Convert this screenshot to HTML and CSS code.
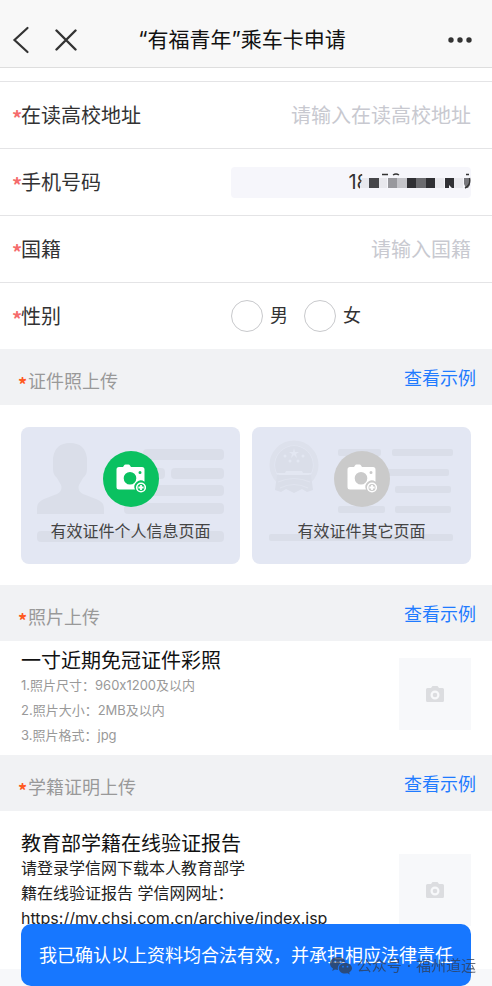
FILE: index.html
```html
<!DOCTYPE html>
<html lang="zh-CN">
<head>
<meta charset="utf-8">
<meta name="viewport" content="width=device-width, initial-scale=1">
<title>“有福青年”乘车卡申请</title>
<link rel="stylesheet" href="styles.css">
</head>
<body>
<svg class="defs" aria-hidden="true">
  <symbol id="camera-add" viewBox="0 0 30 30">
    <path fill="#fff" fill-rule="evenodd" d="M3 3H7L8 1.500Q8.500 .5 9.500 .5H12.500Q13.500 .5 14 1.500L15 3H26Q28.500 3 28.500 5.500V17.800A6.300 6.300 0 0 0 19 25.500H3Q.5 25.500 .5 23V5.500Q.5 3 3 3ZM14 8A6.300 6.300 0 1 0 14 20.600A6.300 6.300 0 1 0 14 8ZM24 7A1.500 1.500 0 1 0 24 10A1.500 1.500 0 1 0 24 7Z"/>
    <circle cx="25" cy="23.500" r="4.300" fill="none" stroke="#fff" stroke-width="1.600"/>
    <path d="M25 20.900V26.100M22.400 23.500H27.600" stroke="#fff" stroke-width="1.800"/>
  </symbol>
  <symbol id="camera" viewBox="0 0 18 16">
    <path fill="#dcdde0" fill-rule="evenodd" d="M1.500 2H5L6.500 0H11.500L13 2H16.500Q18 2 18 3.500V14.500Q18 16 16.500 16H1.500Q0 16 0 14.500V3.500Q0 2 1.500 2ZM9 4.500A4.500 4.500 0 1 0 9 13.500A4.500 4.500 0 1 0 9 4.500ZM9 6.700A2.300 2.300 0 1 1 9 11.300A2.300 2.300 0 1 1 9 6.700Z"/>
  </symbol>
</svg>

<header class="navbar">
  <div class="nav-side">
    <button class="icon-btn" type="button" aria-label="返回"><svg width="18" height="28" viewBox="0 0 18 28"><path d="M15.500 2L2.500 14L15.500 26" fill="none" stroke="#333" stroke-width="2.200" stroke-linecap="round"/></svg></button>
    <button class="icon-btn" type="button" aria-label="关闭"><svg width="22" height="22" viewBox="0 0 22 22"><path d="M1.500 1.500L20.500 20.500M20.500 1.500L1.500 20.500" fill="none" stroke="#333" stroke-width="2.400" stroke-linecap="round"/></svg></button>
  </div>
  <h1 class="nav-title">“有福青年”乘车卡申请</h1>
  <div class="nav-side nav-end">
    <button class="icon-btn" type="button" aria-label="更多"><svg width="24" height="6" viewBox="0 0 24 6"><g fill="#333"><circle cx="3" cy="3" r="2.700"/><circle cx="12" cy="3" r="2.700"/><circle cx="21" cy="3" r="2.700"/></g></svg></button>
  </div>
</header>

<form id="apply">
  <div class="row">
    <label class="label" for="address"><span class="star">*</span>在读高校地址</label>
    <input class="field" id="address" type="text" placeholder="请输入在读高校地址">
  </div>
  <div class="row">
    <label class="label" for="phone"><span class="star">*</span>手机号码</label>
    <div class="phone">
      <input class="field phone-field" id="phone" type="text" value="18">
      <svg class="mask" width="112" height="18" viewBox="0 0 112 18" aria-hidden="true">
        <path fill="#f6f6fb" d="M3 0H112V18H1V14L4 9Z"/>
        <path fill="#e8e8ed" d="M3 5H10V15H1ZM20 5H28V15H20ZM76 5H85V15H76ZM95 5H104V15H95Z"/>
        <path fill="#46464a" d="M10 5H20V15H10Z"/>
        <path fill="#98989d" d="M29 5H38V15H29Z"/>
        <path fill="#c4c4c9" d="M38 5H48V15H38Z"/>
        <path fill="#303034" d="M48 5H57V15H48ZM67 5H76V15H67ZM86 5H95V15H93L90 12V15H86Z"/>
        <path fill="#6c6c70" d="M57 5H67V15H57Z"/>
        <path fill="#77777c" d="M105 5H111V12L109 15H107L105 11Z"/>
        <path d="M23 1.500H29M34 2Q37 0 40 2M107 1.500H110M110.500 5Q112 12 106 15" fill="none" stroke="#333" stroke-width="1.400"/>
      </svg>
    </div>
  </div>
  <div class="row">
    <label class="label" for="nation"><span class="star">*</span>国籍</label>
    <input class="field" id="nation" type="text" placeholder="请输入国籍">
  </div>
  <div class="row" role="radiogroup" aria-labelledby="gender">
    <span class="label" id="gender"><span class="star">*</span>性别</span>
    <div class="radios">
      <label class="radio"><input type="radio" name="gender" value="m">男</label>
      <label class="radio"><input type="radio" name="gender" value="f">女</label>
    </div>
  </div>

  <section>
    <div class="bar">
      <h2 class="bar-title"><span class="star">*</span>证件照上传</h2>
      <a class="bar-link" href="#sample-id">查看示例</a>
    </div>
    <div class="cards">
      <button class="card" type="button">
        <svg class="card-art" viewBox="0 0 219 137" preserveAspectRatio="none" aria-hidden="true">
          <g fill="#dadee9">
            <path d="M16 87V81Q16 75 23 72L36 67Q42 64 40 58L36 51Q32 48 32 42V31Q34 16 49 16Q64 16 66 31V42Q66 48 62 51L58 58Q56 64 62 67L75 72Q83 75 83 81V87Z"/>
            <rect x="122" y="22" width="81" height="11" rx="4"/><rect x="110" y="41" width="34" height="11" rx="4"/><rect x="150" y="41" width="53" height="11" rx="4"/><rect x="110" y="58" width="93" height="11" rx="4"/><rect x="103" y="76" width="100" height="11" rx="4"/><rect x="16" y="104" width="187" height="11" rx="4"/>
          </g>
        </svg>
        <span class="shot shot-on"><svg width="30" height="30"><use href="#camera-add"/></svg></span>
        <span class="card-text">有效证件个人信息页面</span>
      </button>
      <button class="card" type="button">
        <svg class="card-art" viewBox="0 0 219 137" preserveAspectRatio="none" aria-hidden="true">
          <g fill="#dadee9">
            <rect x="86" y="22" width="43" height="7" rx="2"/><rect x="140" y="22" width="61" height="7" rx="2"/><rect x="130" y="42" width="67" height="7" rx="2"/><rect x="143" y="59" width="56" height="7" rx="2"/><rect x="86" y="79" width="47" height="7" rx="2"/><rect x="143" y="79" width="56" height="7" rx="2"/><rect x="17" y="107" width="184" height="7" rx="2"/>
            <circle cx="42" cy="38" r="19"/>
          </g>
          <circle cx="42" cy="38" r="22" fill="none" stroke="#dde1ec" stroke-width="5"/>
          <path fill="#dadee9" d="M25 48H59L61 63L55 65L50 62L42 66L34 62L29 65L23 63Z"/>
          <g fill="#e3e7f2">
            <path d="M42 21L43 25H47L44 27L45 31L42 28L39 31L40 27L37 25H41Z"/>
            <circle cx="33" cy="29" r="1.500"/><circle cx="51" cy="29" r="1.500"/><circle cx="38" cy="34" r="1.500"/><circle cx="46" cy="34" r="1.500"/>
            <path d="M34 44H50L51 46H60L57 48H27L24 46H33Z"/>
          </g>
          <path d="M26 55Q42 48 58 55M28 61Q42 54 56 61" fill="none" stroke="#e0e4ef" stroke-width="1.200"/>
        </svg>
        <span class="shot"><svg width="30" height="30"><use href="#camera-add"/></svg></span>
        <span class="card-text">有效证件其它页面</span>
      </button>
    </div>
  </section>

  <section>
    <div class="bar">
      <h2 class="bar-title"><span class="star">*</span>照片上传</h2>
      <a class="bar-link" href="#sample-photo">查看示例</a>
    </div>
    <div class="upload photo">
      <div>
        <h3 class="upload-title">一寸近期免冠证件彩照</h3>
        <ul class="notes">
          <li>1.照片尺寸：960x1200及以内</li>
          <li>2.照片大小：2MB及以内</li>
          <li>3.照片格式：jpg</li>
        </ul>
      </div>
      <button class="thumb" type="button" aria-label="上传照片"><svg width="18" height="16"><use href="#camera"/></svg></button>
    </div>
  </section>

  <section>
    <div class="bar">
      <h2 class="bar-title"><span class="star">*</span>学籍证明上传</h2>
      <a class="bar-link" href="#sample-report">查看示例</a>
    </div>
    <div class="upload report">
      <div>
        <h3 class="upload-title">教育部学籍在线验证报告</h3>
        <p class="desc">请登录学信网下载本人教育部学<br>籍在线验证报告 学信网网址：<br>https://my.chsi.com.cn/archive/index.jsp</p>
      </div>
      <button class="thumb" type="button" aria-label="上传学籍证明"><svg width="18" height="16"><use href="#camera"/></svg></button>
    </div>
  </section>
</form>

<div class="submit-bar">
  <button class="submit" type="submit" form="apply">我已确认以上资料均合法有效，并承担相应法律责任</button>
</div>
<div class="watermark">
  <svg width="22" height="18" viewBox="0 0 22 18" aria-hidden="true"><path fill="currentColor" fill-rule="evenodd" d="M8 0C3.500 0 0 2.900 0 6.500C0 8.500 1.100 10.300 3 11.500L2.200 14L5 12.500L8 13C7 8.500 10.500 5 15.500 5C14.800 2 11.700 0 8 0ZM5.300 3.500A1 1 0 1 1 5.300 5.500A1 1 0 1 1 5.300 3.500ZM10.500 3.500A1 1 0 1 1 10.500 5.500A1 1 0 1 1 10.500 3.500ZM15.200 6C11.500 6 8.800 8.400 8.800 11.300C8.800 14.300 11.500 16.600 15.200 16.600L17.500 16.300L19.800 17.600L19.200 15.500C21 14.500 22 13 22 11.300C22 8.400 19 6 15.200 6ZM13 8.800A.9 .9 0 1 1 13 10.600A.9 .9 0 1 1 13 8.800ZM17.500 8.800A.9 .9 0 1 1 17.500 10.600A.9 .9 0 1 1 17.500 8.800Z"/></svg>
  <span>公众号</span><span>·</span><span>福州道运</span>
</div>
</body>
</html>
```
FILE: styles.css
```css
* {
  box-sizing: border-box;
}

body {
  margin: 0;
  background: #f7f8fa;
  color: #323233;
  font-family: Inter, "Noto Sans CJK SC", sans-serif;
  font-size: 20px;
  line-height: 24px;
}

h1, h2, h3, p, ul {
  margin: 0;
  padding: 0;
  font-weight: 400;
}

button, input {
  font: inherit;
  color: inherit;
}

button {
  border: 0;
  padding: 0;
  background: none;
}

svg {
  display: block;
}

.defs {
  position: absolute;
  width: 0;
  height: 0;
}

.navbar {
  display: flex;
  align-items: center;
  height: 68px;
  padding: 12px 20px 0 12px;
  background: #f8f8f8;
  border-bottom: 1px solid #dedede;
}

.nav-side {
  display: flex;
  flex: 1;
  align-items: center;
  gap: 25px;
}

.nav-end {
  justify-content: flex-end;
}

.nav-title {
  color: #111;
  font-size: 21px;
}

form {
  padding-top: 13px;
  background: #fff;
}

.row {
  display: flex;
  align-items: center;
  justify-content: space-between;
  height: 67px;
  padding: 0 21px 0 12px;
  border-top: 1px solid #e4e4e6;
}

.label {
  display: flex;
  padding-top: 2px;
}

.star {
  width: 9px;
  padding-top: 4px;
  color: #f56c6c;
  font-family: "Noto Sans CJK SC", sans-serif;
  font-weight: 700;
  line-height: 20px;
}

.field {
  width: 240px;
  height: 31px;
  padding: 2px 0 0;
  border: 0;
  border-radius: 4px;
  background: none;
  text-align: right;
}

.field::placeholder {
  color: #c8c9d0;
  opacity: 1;
}

.phone {
  position: relative;
}

.phone-field {
  display: block;
  padding: 0 102px 0 0;
  background: #f6f6fb;
}

.mask {
  position: absolute;
  top: 6px;
  right: 0;
}

.radios {
  display: flex;
  gap: 16px;
  width: 240px;
}

.radio {
  display: flex;
  align-items: center;
  gap: 7px;
  font-size: 18px;
}

.radio input {
  width: 32px;
  height: 32px;
  margin: 0;
  appearance: none;
  border: 1px solid #c8c9cc;
  border-radius: 50%;
}

.radio input:checked {
  border: 9px solid #1677ff;
}

.bar {
  display: flex;
  justify-content: space-between;
  height: 56px;
  padding: 18px 16px 0 18px;
  background: #f1f2f4;
  font-size: 18px;
}

.bar-title {
  display: flex;
  padding-top: 3px;
  color: #999;
  font-size: 18px;
}

.bar-title .star {
  width: 10px;
  color: #ff5a1f;
}

.bar-link {
  color: #1f7bff;
  text-decoration: none;
}

.cards {
  display: grid;
  grid-template-columns: 1fr 1fr;
  gap: 12px;
  padding: 22px 21px 21px;
}

.card {
  position: relative;
  display: flex;
  flex-direction: column;
  align-items: center;
  gap: 12px;
  height: 137px;
  padding-top: 24px;
  border-radius: 8px;
  overflow: hidden;
  background: #e3e7f3;
}

.card-art {
  position: absolute;
  inset: 0;
  width: 100%;
  height: 100%;
}

.shot {
  position: relative;
  display: grid;
  place-items: center;
  width: 56px;
  height: 56px;
  border-radius: 50%;
  background: #cacaca;
}

.shot-on {
  background: #0ac160;
}

.card-text {
  position: relative;
  color: #444;
  font-size: 16px;
}

.upload {
  display: flex;
  justify-content: space-between;
  padding: 0 21px;
}

.photo {
  height: 114px;
  padding-top: 8px;
}

.report {
  height: 158px;
  padding-top: 21px;
}

.upload-title {
  color: #111;
  font-size: 20px;
}

.notes {
  color: #999;
  font-size: 13px;
  line-height: 25px;
  list-style: none;
}

.desc {
  color: #222;
  font-size: 16px;
  line-height: 25px;
  white-space: nowrap;
}

.thumb {
  display: grid;
  flex: none;
  place-items: center;
  width: 72px;
  height: 72px;
  margin-top: 9px;
  background: #f7f8fa;
}

.report .thumb {
  margin-top: 22px;
}

.submit-bar {
  position: fixed;
  right: 21px;
  bottom: 0;
  left: 21px;
}

.submit {
  width: 100%;
  height: 62px;
  padding-top: 2px;
  border-radius: 10px;
  background: #1777ff;
  color: #fff;
  font-size: 18px;
}

.watermark {
  position: fixed;
  right: 16px;
  bottom: 8px;
  display: flex;
  align-items: center;
  gap: 5px;
  color: rgba(50, 60, 80, 0.75);
  font-size: 15px;
}
```
